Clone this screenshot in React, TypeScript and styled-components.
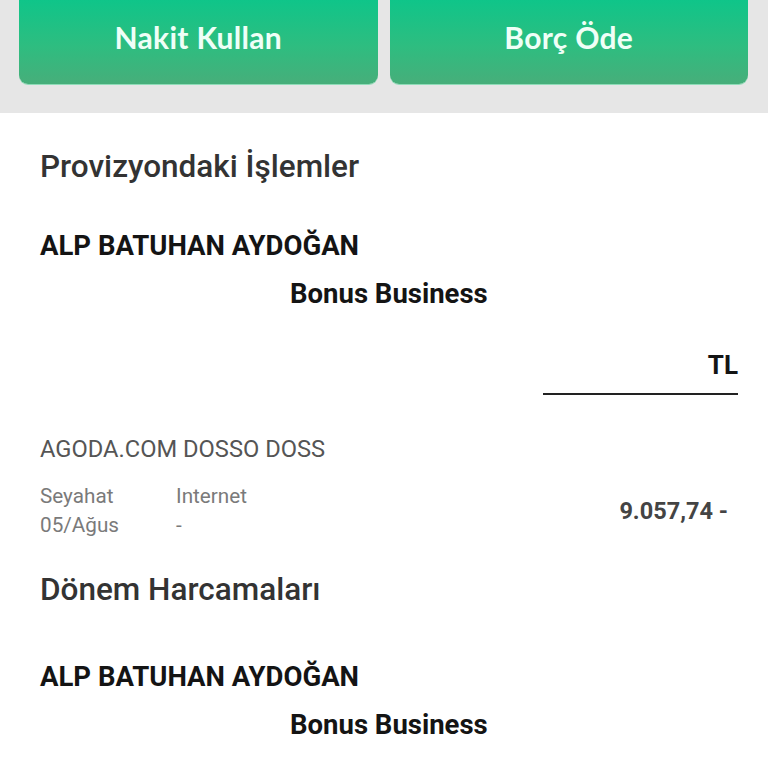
import * as React from "react";
import styled, { createGlobalStyle } from "styled-components";

const GlobalStyle = createGlobalStyle`
  html, body {
    margin: 0;
    padding: 0;
    background: #ffffff;
    font-family: Roboto, "Liberation Sans", sans-serif;
  }
`;

type Transaction = {
  merchant: string;
  category: string;
  channel: string;
  date: string;
  detail: string;
  amount: string;
};

const pending: Transaction[] = [
  {
    merchant: "AGODA.COM DOSSO DOSS",
    category: "Seyahat",
    channel: "Internet",
    date: "05/Ağus",
    detail: "-",
    amount: "9.057,74 -",
  },
];

export default function App() {
  return (
    <Page>
      <GlobalStyle />
      <ActionBar>
        <ActionButton>Nakit Kullan</ActionButton>
        <ActionButton>Borç Öde</ActionButton>
      </ActionBar>

      <Content>
        <SectionTitle>Provizyondaki İşlemler</SectionTitle>
        <CardHolder $top={41}>ALP BATUHAN AYDOĞAN</CardHolder>
        <CardName>Bonus Business</CardName>

        <CurrencyHeader>
          <CurrencyLabel>TL</CurrencyLabel>
        </CurrencyHeader>

        {pending.map((t, i) => (
          <TransactionRow key={i}>
            <Merchant>{t.merchant}</Merchant>
            <TransactionBody>
              <MetaGrid>
                <Meta>{t.category}</Meta>
                <Meta>{t.channel}</Meta>
                <Meta>{t.date}</Meta>
                <Meta>{t.detail}</Meta>
              </MetaGrid>
              <Amount>{t.amount}</Amount>
            </TransactionBody>
          </TransactionRow>
        ))}

        <SectionTitle $top={31}>Dönem Harcamaları</SectionTitle>
        <CardHolder $top={49}>ALP BATUHAN AYDOĞAN</CardHolder>
        <CardName>Bonus Business</CardName>
      </Content>
    </Page>
  );
}

const Page = styled.div`
  width: 768px;
  min-height: 768px;
  overflow: hidden;
  background: #ffffff;
`;

const ActionBar = styled.div`
  display: grid;
  grid-template-columns: 1fr 1fr;
  gap: 12px;
  padding: 0 20px 29px 19px;
  background: #e6e6e6;
`;

const ActionButton = styled.button`
  height: 84px;
  border: none;
  border-radius: 0 0 9px 9px;
  padding: 0 0 11px;
  background: linear-gradient(#0fc589 0%, #2ebd80 55%, #47ae7a 100%);
  box-shadow: 0 1px 0 #8fdcb8;
  color: #effff7;
  font-family: Lato, "Open Sans", sans-serif;
  font-weight: 700;
  font-size: 30px;
  letter-spacing: 0.3px;
`;

const Content = styled.div`
  display: flex;
  flex-direction: column;
  padding: 34px 30px 0 40px;
`;

const SectionTitle = styled.h2<{ $top?: number }>`
  margin: ${(p) => p.$top ?? 0}px 0 0;
  font-size: 31.5px;
  font-weight: 500;
  line-height: 40px;
  color: #333333;
`;

const CardHolder = styled.div<{ $top: number }>`
  margin-top: ${(p) => p.$top}px;
  font-size: 27.5px;
  font-weight: 700;
  line-height: 36px;
  color: #141414;
`;

const CardName = styled.div`
  margin-top: 12px;
  padding-left: 250px;
  font-size: 27.5px;
  font-weight: 700;
  line-height: 36px;
  color: #141414;
`;

const CurrencyHeader = styled.div`
  display: flex;
  justify-content: flex-end;
  margin-top: 35px;
`;

const CurrencyLabel = styled.div`
  width: 195px;
  padding-bottom: 10px;
  border-bottom: 2px solid #222222;
  text-align: right;
  font-size: 26px;
  font-weight: 700;
  line-height: 36px;
  color: #141414;
`;

const TransactionRow = styled.div`
  display: flex;
  flex-direction: column;
  margin-top: 37px;
`;

const Merchant = styled.div`
  font-size: 23.7px;
  line-height: 34px;
  color: #555555;
`;

const TransactionBody = styled.div`
  display: flex;
  align-items: center;
  justify-content: space-between;
  margin-top: 16px;
`;

const MetaGrid = styled.div`
  display: grid;
  grid-template-columns: 136px auto;
  row-gap: 1px;
`;

const Meta = styled.div`
  font-size: 20.7px;
  line-height: 28px;
  color: #7a7a7a;
`;

const Amount = styled.div`
  padding-right: 10px;
  font-size: 23.5px;
  font-weight: 700;
  color: #444444;
`;
